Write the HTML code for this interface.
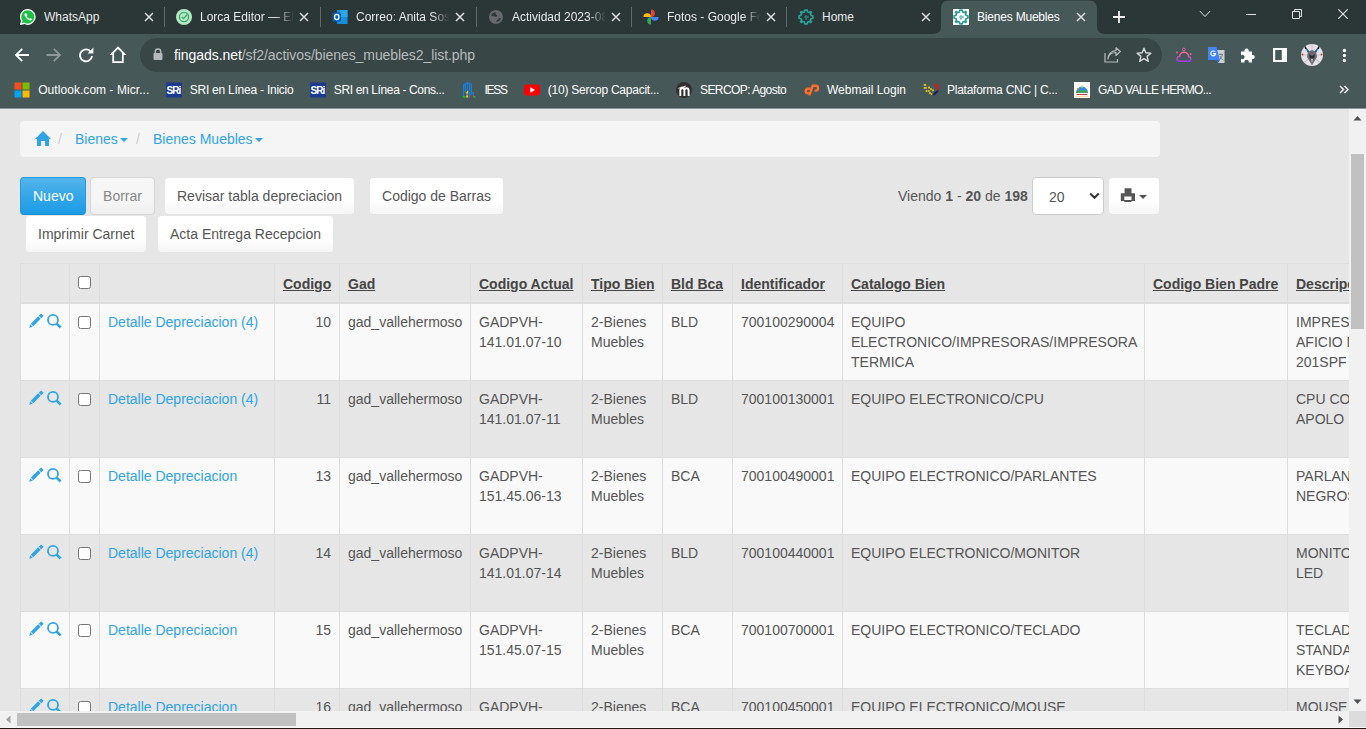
<!DOCTYPE html>
<html><head><meta charset="utf-8"><style>
*{box-sizing:border-box;margin:0;padding:0}
html,body{width:1366px;height:729px;overflow:hidden}
body{position:relative;font-family:"Liberation Sans",sans-serif;background:#e6e6e6;color:#555}
.abs{position:absolute}
#tabstrip{position:absolute;left:0;top:0;width:1366px;height:34px;background:#2b3636}
.tab{position:absolute;top:0;height:34px;width:155px}
.tab .ic{position:absolute;left:10px;top:9px;width:16px;height:16px}
.tt{position:absolute;top:10px;font-size:12px;line-height:14px;color:#e8eaea;white-space:nowrap;overflow:hidden}
.tt.fade{-webkit-mask-image:linear-gradient(90deg,#000 calc(100% - 18px),transparent 100%)}
.tab .x{position:absolute;left:135px;top:13px;width:8px;height:8px}
.sep{position:absolute;top:7px;width:1px;height:20px;background:#5d6a6a}
#toolbar{position:absolute;left:0;top:34px;width:1366px;height:74px;background:#475858}
#omni{position:absolute;left:140px;top:38px;width:1022px;height:34px;border-radius:17px;background:#394646}
.url{position:absolute;left:174px;top:47px;font-size:14px;line-height:16px;color:#b7bcbc;white-space:nowrap}
.url b{font-weight:400;color:#fff}
.bm{position:absolute;top:82px;height:16px}
.bm .bi{position:absolute;left:0;top:0;width:16px;height:16px}
.bt{position:absolute;top:83px;font-size:12px;line-height:14px;color:#ffffff;white-space:nowrap}
#page{position:absolute;left:0;top:108px;width:1349px;height:603px;overflow:hidden;background:#e6e6e6}

.bc{position:absolute;left:20px;top:13px;width:1140px;height:36px;background:#f5f5f5;border-radius:4px}
.bc a{position:absolute;top:9px;font-size:14px;line-height:18px;color:#2fa4e7;white-space:nowrap;text-decoration:none}
.bc .sl{position:absolute;top:9px;font-size:14px;line-height:18px;color:#ccc}
.caret{display:inline-block;width:0;height:0;margin-left:2px;vertical-align:middle;border-top:4px solid;border-right:4px solid transparent;border-left:4px solid transparent}
.btn{position:absolute;height:38px;font-size:14px;line-height:20px;padding:8px 12px;color:#555;border:1px solid #e6e6e6;border-radius:4px;background:linear-gradient(#fff,#fff 60%,#f5f5f5);white-space:nowrap;text-align:center}
.btn.pri{color:#fff;border-color:#1f9ce5;border-bottom-color:#178acc;background:linear-gradient(#54b4eb,#2fa4e7 60%,#1d9ce5)}
.btn.dis{color:#888;border-color:#d6d6d6;background:linear-gradient(#f6f6f6,#f6f6f6 60%,#efefef)}
.info{position:absolute;left:898px;top:78px;font-size:14px;line-height:20px;white-space:nowrap;color:#555}
.info b{color:#555}
.sel{position:absolute;left:1032px;top:69px;width:72px;height:38px;background:#fff;border:1px solid #ccc;border-radius:4px}
table.t{position:absolute;left:20px;top:155px;border-collapse:collapse;table-layout:fixed;font-size:14px;line-height:20px}
table.t th,table.t td{border:1px solid #ddd;padding:8px;vertical-align:top;text-align:left;overflow:hidden;white-space:nowrap}
table.t th{border-bottom:2px solid #ddd;vertical-align:bottom;padding-top:10px}
table.t th a{color:#444;font-weight:700;text-decoration:underline}
table.t tr.o td{background:#f9f9f9}
table.t td{height:77px}
table.t td a{color:#2fa4e7;text-decoration:none}
.r{text-align:right!important}
.wr{white-space:normal!important}
.cb{display:inline-block;width:13px;height:13px;border:1px solid #767676;border-radius:2.5px;background:#fff;margin-top:4px;margin-left:0}
</style></head><body>
<div id="tabstrip"></div>
<svg class="abs" style="left:933px;top:0" width="180" height="34" viewBox="0 0 180 34"><path d="M0 34 Q8 34 8 26 V8.5 Q8 0.5 16 0.5 H156 Q164 0.5 164 8.5 V26 Q164 34 172 34 Z" fill="#475858"/></svg>
<svg class="abs" style="left:20px;top:9px" width="16" height="16" viewBox="0 0 16 16"><path d="M8 0.6 A7.3 7.3 0 1 1 4.2 14.3 L0.6 15.4 L1.8 11.9 A7.3 7.3 0 0 1 8 0.6 Z" fill="#1cc145" stroke="#fff" stroke-width="1.3"/><path d="M5.2 4.2 C4.6 4.6 4.3 5.4 4.7 6.4 C5.4 8.3 7.4 10.6 9.8 11.3 C10.8 11.6 11.5 11.2 11.8 10.6 L11.9 9.9 L10.2 9.1 L9.5 9.9 C8.4 9.4 7.3 8.4 6.6 7.2 L7.3 6.4 L6.5 4.4 Z" fill="#fff"/></svg>
<div class="tt" style="left:44px;width:92px;color:#e6eaea">WhatsApp</div>
<svg class="abs" style="left:144px;top:12px" width="10" height="10" viewBox="0 0 10 10"><path d="M1 1 L9 9 M9 1 L1 9" stroke="#dfe3e3" stroke-width="1.5"/></svg>
<svg class="abs" style="left:176px;top:9px" width="16" height="16" viewBox="0 0 16 16"><circle cx="8" cy="8" r="8" fill="#b5e8c6"/><circle cx="8" cy="8" r="4.6" fill="none" stroke="#3aa866" stroke-width="1.3"/><path d="M5.8 8 L7.5 9.6 L11.5 5.2" fill="none" stroke="#3aa866" stroke-width="1.4"/></svg>
<div class="tt fade" style="left:200px;width:94px;color:#e6eaea">Lorca Editor — El</div>
<svg class="abs" style="left:299px;top:12px" width="10" height="10" viewBox="0 0 10 10"><path d="M1 1 L9 9 M9 1 L1 9" stroke="#dfe3e3" stroke-width="1.5"/></svg>
<svg class="abs" style="left:332px;top:9px" width="16" height="16" viewBox="0 0 16 16"><rect x="5" y="1" width="10.5" height="14" fill="#1490df"/><rect x="8" y="1" width="7.5" height="7" fill="#28a8ea"/><rect x="0.5" y="3.5" width="8.5" height="9" rx="0.8" fill="#0a5db8"/><ellipse cx="4.75" cy="8" rx="2.2" ry="2.6" fill="none" stroke="#fff" stroke-width="1.3"/></svg>
<div class="tt fade" style="left:356px;width:94px;color:#e6eaea">Correo: Anita Sos</div>
<svg class="abs" style="left:455px;top:12px" width="10" height="10" viewBox="0 0 10 10"><path d="M1 1 L9 9 M9 1 L1 9" stroke="#dfe3e3" stroke-width="1.5"/></svg>
<svg class="abs" style="left:489px;top:10px" width="14" height="14" viewBox="0 0 14 14"><circle cx="7" cy="7" r="7" fill="#65686e"/><path d="M2.2 5.5 C3 3.2 5 2.2 7 2.6 C6.2 3.6 6.6 4.6 7.6 5 C8.6 5.4 8.2 6.6 7.2 6.8 C6 7 5.2 6 4.2 6.2 C3.4 6.3 2.8 6 2.2 5.5 Z M6.8 11.6 C7.6 10.4 8.6 10 9.2 9 C9.8 8 10.8 7.8 11.8 8.4 C11.4 10.4 9.6 11.6 6.8 11.6 Z" fill="#2b3636"/></svg>
<div class="tt fade" style="left:512px;width:94px;color:#e6eaea">Actividad 2023-08</div>
<svg class="abs" style="left:611px;top:12px" width="10" height="10" viewBox="0 0 10 10"><path d="M1 1 L9 9 M9 1 L1 9" stroke="#dfe3e3" stroke-width="1.5"/></svg>
<svg class="abs" style="left:643px;top:9px" width="16" height="16" viewBox="0 0 16 16"><path d="M8 0.4 A3.8 3.8 0 0 1 8 8 Z" fill="#ea4335"/><path d="M15.6 8 A3.8 3.8 0 0 1 8 8 Z" fill="#4285f4"/><path d="M8 15.6 A3.8 3.8 0 0 1 8 8 Z" fill="#34a853"/><path d="M0.4 8 A3.8 3.8 0 0 1 8 8 Z" fill="#fbbc04"/></svg>
<div class="tt fade" style="left:667px;width:94px;color:#e6eaea">Fotos - Google Fotos</div>
<svg class="abs" style="left:766px;top:12px" width="10" height="10" viewBox="0 0 10 10"><path d="M1 1 L9 9 M9 1 L1 9" stroke="#dfe3e3" stroke-width="1.5"/></svg>
<svg class="abs" style="left:798px;top:9px" width="16" height="16" viewBox="0 0 16 16"><path d="M6.8 1.6 H9.2 L9.5 3.3 L10.9 3.9 L12.3 2.9 L13.1 3.7 L12.1 5.1 L12.7 6.5 L14.4 6.8 V9.2 L12.7 9.5 L12.1 10.9 L13.1 12.3 L12.3 13.1 L10.9 12.1 L9.5 12.7 L9.2 14.4 H6.8 L6.5 12.7 L5.1 12.1 L3.7 13.1 L2.9 12.3 L3.9 10.9 L3.3 9.5 L1.6 9.2 V6.8 L3.3 6.5 L3.9 5.1 L2.9 3.7 L3.7 2.9 L5.1 3.9 L6.5 3.3 Z" fill="none" stroke="#2aa39a" stroke-width="1.5" stroke-linejoin="round" transform="translate(8 8) scale(1.08) translate(-8 -8)"/><circle cx="8" cy="8" r="1.2" fill="none" stroke="#2aa39a" stroke-width="0.9"/><path d="M8 9.2 V11 M9.2 8 H11" stroke="#2aa39a" stroke-width="0.9"/></svg>
<div class="tt" style="left:822px;width:91px;color:#e6eaea">Home</div>
<svg class="abs" style="left:921px;top:12px" width="10" height="10" viewBox="0 0 10 10"><path d="M1 1 L9 9 M9 1 L1 9" stroke="#dfe3e3" stroke-width="1.5"/></svg>
<svg class="abs" style="left:953px;top:9px" width="16" height="16" viewBox="0 0 16 16"><rect width="16" height="16" fill="#fff"/><path d="M6.8 1.6 H9.2 L9.5 3.3 L10.9 3.9 L12.3 2.9 L13.1 3.7 L12.1 5.1 L12.7 6.5 L14.4 6.8 V9.2 L12.7 9.5 L12.1 10.9 L13.1 12.3 L12.3 13.1 L10.9 12.1 L9.5 12.7 L9.2 14.4 H6.8 L6.5 12.7 L5.1 12.1 L3.7 13.1 L2.9 12.3 L3.9 10.9 L3.3 9.5 L1.6 9.2 V6.8 L3.3 6.5 L3.9 5.1 L2.9 3.7 L3.7 2.9 L5.1 3.9 L6.5 3.3 Z" fill="none" stroke="#2a9d94" stroke-width="1.5" stroke-linejoin="round" transform="translate(8 8) scale(1.08) translate(-8 -8)"/><circle cx="8" cy="8" r="1.2" fill="none" stroke="#2a9d94" stroke-width="0.9"/><path d="M8 9.2 V11 M9.2 8 H11" stroke="#2a9d94" stroke-width="0.9"/></svg>
<div class="tt" style="left:977px;width:91px;color:#ffffff;letter-spacing:-0.2px">Bienes Muebles</div>
<svg class="abs" style="left:1076px;top:12px" width="10" height="10" viewBox="0 0 10 10"><path d="M1 1 L9 9 M9 1 L1 9" stroke="#dfe3e3" stroke-width="1.5"/></svg>
<div class="sep" style="left:164px"></div>
<div class="sep" style="left:320px"></div>
<div class="sep" style="left:476px"></div>
<div class="sep" style="left:631px"></div>
<div class="sep" style="left:786px"></div>
<svg class="abs" style="left:1113px;top:11px" width="12" height="12" viewBox="0 0 12 12"><path d="M6 0 V12 M0 6 H12" stroke="#f4f6f6" stroke-width="1.8"/></svg>
<svg class="abs" style="left:1199px;top:10px" width="12" height="8" viewBox="0 0 12 8"><path d="M0.8 1 L6 6.5 L11.2 1" fill="none" stroke="#e3e6e6" stroke-width="1"/></svg>
<div class="abs" style="left:1246px;top:14px;width:10px;height:1px;background:#e3e6e6"></div>
<svg class="abs" style="left:1292px;top:9px" width="10" height="10" viewBox="0 0 10 10"><path d="M2.5 2.5 V0.5 H9.5 V7.5 H7.5 M0.5 2.5 H7.5 V9.5 H0.5 Z" fill="none" stroke="#e3e6e6" stroke-width="1"/></svg>
<svg class="abs" style="left:1338px;top:9px" width="10" height="10" viewBox="0 0 10 10"><path d="M0.3 0.3 L9.7 9.7 M9.7 0.3 L0.3 9.7" stroke="#e3e6e6" stroke-width="1.1"/></svg>
<div id="toolbar"></div>
<div id="omni"></div>
<svg class="abs" style="left:14px;top:47px" width="16" height="16" viewBox="0 0 16 16"><path d="M15 8 H2.5 M8.2 1.8 L2 8 L8.2 14.2" fill="none" stroke="#ffffff" stroke-width="1.8"/></svg>
<svg class="abs" style="left:46px;top:47px" width="16" height="16" viewBox="0 0 16 16"><path d="M0.5 8 H13.5 M7.8 1.8 L14 8 L7.8 14.2" fill="none" stroke="#8d9898" stroke-width="1.8"/></svg>
<svg class="abs" style="left:78px;top:47px" width="16" height="16" viewBox="0 0 16 16"><path d="M13 5 A6 6 0 1 0 14 9" fill="none" stroke="#ffffff" stroke-width="1.8"/><path d="M15.4 0.6 V6.4 H9.6 Z" fill="#ffffff"/></svg>
<svg class="abs" style="left:109px;top:46px" width="18" height="18" viewBox="0 0 18 18"><path d="M9 1.6 L2.6 8.2 H4.2 V16.2 H13.8 V8.2 H15.4 Z" fill="none" stroke="#ffffff" stroke-width="1.8" stroke-linejoin="miter"/></svg>
<svg class="abs" style="left:153px;top:48px" width="10" height="12" viewBox="0 0 10 12"><path d="M2.3 5 V3.6 A2.7 2.7 0 0 1 7.7 3.6 V5" fill="none" stroke="#b3b8b8" stroke-width="1.5"/><rect x="0.5" y="5" width="9" height="7" rx="1" fill="#b3b8b8"/></svg>
<svg class="abs" style="left:1104px;top:47px" width="17" height="16" viewBox="0 0 17 16"><path d="M1 6 V15 H13.5 V12" fill="none" stroke="#b7bcbc" stroke-width="1.2"/><path d="M4 12 C4.5 7.5 8 5.5 12 5.5 V8.5 L16.3 4.5 L12 0.8 V3.6 C7 3.8 4.2 7.5 4 12 Z" fill="none" stroke="#b7bcbc" stroke-width="1.2" stroke-linejoin="round"/></svg>
<svg class="abs" style="left:1136px;top:47px" width="16" height="16" viewBox="0 0 16 16"><path d="M8 1.2 L9.9 5.8 L14.9 6.2 L11.1 9.4 L12.3 14.3 L8 11.7 L3.7 14.3 L4.9 9.4 L1.1 6.2 L6.1 5.8 Z" fill="none" stroke="#d5d9d9" stroke-width="1.4" stroke-linejoin="round"/></svg>
<svg class="abs" style="left:1175px;top:47px" width="18" height="16" viewBox="0 0 18 16"><defs><linearGradient id="wg" x1="0" y1="0" x2="0" y2="1"><stop offset="0" stop-color="#ff6a8a"/><stop offset="1" stop-color="#9b3df0"/></linearGradient></defs><circle cx="8.8" cy="2.4" r="1.3" fill="none" stroke="#e060b0" stroke-width="1"/><circle cx="2" cy="5.5" r="1" fill="#e060b0"/><circle cx="15.6" cy="7" r="1" fill="#e060b0"/><path d="M4 14.2 H13.6 A2.2 2.2 0 0 0 13.6 9.8 A4.4 4.4 0 0 0 4.6 9.6 A2.3 2.3 0 0 0 4 14.2 Z" fill="none" stroke="url(#wg)" stroke-width="1.5"/></svg>
<svg class="abs" style="left:1208px;top:47px" width="17" height="16" viewBox="0 0 17 16"><path d="M7 3 H16.5 V16 H10 Z" fill="#ccd0d0"/><path d="M11.2 7.5 H15 M13 6.5 V7.5 M11.8 9 C12.5 11 14 12.5 15.3 13 M14.4 7.5 C14 10 12.5 12 11 13" stroke="#6f7777" stroke-width="0.9" fill="none"/><path d="M0 0 H8.5 L12 13 H0 Z" fill="#4285f4"/><path d="M7.6 6.3 A2.4 2.4 0 1 1 6.9 4.7 M5.3 6.6 H7.7" fill="none" stroke="#fff" stroke-width="1.2"/><path d="M8.5 13 L10 16 L12 13 Z" fill="#2b62c4"/></svg>
<svg class="abs" style="left:1240px;top:48px" width="16" height="15" viewBox="0 0 16 15"><path d="M1 3.6 H4.6 A2.2 2.2 0 1 1 8.6 3.6 H12 V7 A2.1 2.1 0 1 1 12 11 V14.5 H8.7 A2.2 2.2 0 1 0 4.5 14.5 H1 V10.5 A2.1 2.1 0 1 0 1 7.6 Z" fill="#ffffff"/></svg>
<svg class="abs" style="left:1273px;top:48px" width="14" height="14" viewBox="0 0 14 14"><path d="M0 0 H14 V14 H0 Z M2.2 2 V12 H8.8 V2 Z" fill="#fff" fill-rule="evenodd"/></svg>
<svg class="abs" style="left:1301px;top:44px" width="22" height="22" viewBox="0 0 22 22"><defs><clipPath id="avc"><circle cx="11" cy="11" r="11"/></clipPath></defs><g clip-path="url(#avc)"><rect width="22" height="22" fill="#e4e2e8"/><path d="M11 0 V22 M0 11 H22 M2 2 L20 20 M20 2 L2 20" stroke="#c9c4cc" stroke-width="1.2"/><path d="M4 2 L9 8 L6.5 8.5 Z M18 2 L13 8 L15.5 8.5 Z" fill="#1d5fb0"/><path d="M3.5 1.5 L5 5 M18.5 1.5 L17 5" stroke="#111" stroke-width="1.3"/><path d="M7 8 L11 6 L15 8 L16 13 L13 18 L11 21 L9 18 L6 13 Z" fill="#6a6a72"/><path d="M8 10 L11 12 L14 10 L13 15 L11 17 L9 15 Z" fill="#2a2a30"/><path d="M9.5 14 L11 15 L12.5 14 L11 19 Z" fill="#b8b8c0"/><circle cx="1.5" cy="10.5" r="0.9" fill="#c53a3a"/><circle cx="20.5" cy="10.5" r="0.9" fill="#c53a3a"/></g></svg>
<svg class="abs" style="left:1342px;top:48px" width="5" height="15" viewBox="0 0 5 15"><circle cx="2.4" cy="2.5" r="1.65" fill="#fff"/><circle cx="2.4" cy="7.5" r="1.65" fill="#fff"/><circle cx="2.4" cy="12.5" r="1.65" fill="#fff"/></svg>
<svg class="abs" style="left:14px;top:82px" width="16" height="16" viewBox="0 0 16 16"><rect x="0.5" y="0.5" width="7" height="7" fill="#f25022"/><rect x="8.5" y="0.5" width="7" height="7" fill="#7fba00"/><rect x="0.5" y="8.5" width="7" height="7" fill="#00a4ef"/><rect x="8.5" y="8.5" width="7" height="7" fill="#ffb900"/></svg>
<div class="bt" style="left:38.2px;letter-spacing:0.056px">Outlook.com - Micr...</div>
<svg class="abs" style="left:166px;top:82px" width="16" height="16" viewBox="0 0 16 16"><rect x="0" y="0.5" width="16" height="15" fill="#1d3a8f"/><text x="0.6" y="12" font-family="Liberation Sans" font-weight="700" font-size="10" fill="#fff" letter-spacing="-1">SRi</text></svg>
<div class="bt" style="left:189.7px;letter-spacing:-0.235px">SRI en Línea - Inicio</div>
<svg class="abs" style="left:310px;top:82px" width="16" height="16" viewBox="0 0 16 16"><rect x="0" y="0.5" width="16" height="15" fill="#1d3a8f"/><text x="0.6" y="12" font-family="Liberation Sans" font-weight="700" font-size="10" fill="#fff" letter-spacing="-1">SRi</text></svg>
<div class="bt" style="left:333.8px;letter-spacing:-0.365px">SRI en Línea - Cons...</div>
<svg class="abs" style="left:462px;top:82px" width="14" height="16" viewBox="0 0 14 16"><path d="M1.6 14.5 V3 L3.4 2.2 V11 M3.4 9 V1.6 L5.5 0.8 V10 M5.5 8 V0.8 L7.6 1.5 V9 M7.6 9 V1.5 L9.4 2.4 V12 M9.4 10 L11.2 10.5 V14.5" fill="none" stroke="#1a7fe0" stroke-width="1.2"/><path d="M4 15.5 L4.8 12.5 L4.2 10.5 L5.6 8.5 L6.4 10 L5.4 12.2 L6.4 15.5 Z" fill="#f7d307"/><path d="M6.8 15.5 V10 L8.2 9.3 L9 11 L8.2 15.5 Z" fill="#1a7fe0"/><path d="M9 15.5 L9.6 12.6 L10.6 13.5 L10 15.5 Z" fill="#e82020"/><path d="M0.5 14.8 H4 M11 14.8 H13.5" stroke="#19c82a" stroke-width="1.3"/></svg>
<div class="bt" style="left:484.6px;letter-spacing:-1.315px">IESS</div>
<svg class="abs" style="left:524px;top:82px" width="16" height="16" viewBox="0 0 16 16"><rect x="0" y="2.5" width="16" height="11" rx="3" fill="#ff0000"/><path d="M6.3 5.2 L11 8 L6.3 10.8 Z" fill="#fff"/></svg>
<div class="bt" style="left:547.8px;letter-spacing:-0.242px">(10) Sercop Capacit...</div>
<svg class="abs" style="left:676px;top:82px" width="16" height="16" viewBox="0 0 16 16"><circle cx="8" cy="8" r="8" fill="#303030"/><path d="M4.3 14 V8.3 C4.3 6.8 5.2 6.2 6.6 6.2 C7.8 6.2 8.4 6.8 8.4 8.1 V14 M8.4 8.1 C8.4 6.8 9.2 6.2 10.5 6.2 C11.9 6.2 12.6 6.8 12.6 8.3 V14" fill="none" stroke="#fff" stroke-width="1.9"/><path d="M1.5 6.3 L7.5 4.3 L10.5 3.6 L8.6 5.6 L4 6.6 Z" fill="#fff"/></svg>
<div class="bt" style="left:700.0px;letter-spacing:-0.575px">SERCOP: Agosto</div>
<svg class="abs" style="left:803px;top:84px" width="17" height="12" viewBox="0 0 17 12"><path d="M8 3.5 H5 A3.5 3.5 0 0 0 5 10.5 H6.5 L7.3 8 H5 A1 1 0 0 1 5 6 H7.3 Z" fill="#ff6c2c"/><path d="M8.8 0.6 H12.6 A3.6 3.6 0 0 1 12.6 7.8 H11.3 L12 5.4 H12.6 A1.2 1.2 0 0 0 12.6 3 H10.6 L7.6 11.6 H5.4 Z" fill="#ff6c2c"/></svg>
<div class="bt" style="left:827.0px;letter-spacing:-0.012px">Webmail Login</div>
<svg class="abs" style="left:923px;top:83px" width="17" height="13" viewBox="0 0 17 13"><g fill="#e9c31a"><rect x="0.5" y="1" width="3" height="1.8" rx="0.9"/><rect x="0.5" y="4" width="3.5" height="1.8" rx="0.9"/><circle cx="6" cy="4.6" r="1.1"/><circle cx="8" cy="6" r="1.1"/><circle cx="10" cy="7.3" r="1.1"/><circle cx="3.6" cy="8" r="1.1"/><circle cx="5.8" cy="8" r="1.1"/><circle cx="7" cy="10" r="1.1"/><circle cx="8.5" cy="11" r="1"/></g><path d="M11 1.5 L13 0.8 L15.5 2.5 L16 6 L14 7.5 L13 4 L11.5 3 Z" fill="#c8201e"/><path d="M9.5 12 L12 9 L16 6.8 L14.5 9.5 L11 12.5 Z" fill="#14185a"/></svg>
<div class="bt" style="left:947.0px;letter-spacing:-0.248px">Plataforma CNC | C...</div>
<svg class="abs" style="left:1074px;top:82px" width="16" height="16" viewBox="0 0 16 16"><rect width="16" height="16" fill="#fff"/><path d="M2 11 A6 6.5 0 0 1 14 11 Z" fill="#2f8ef0"/><path d="M2.2 11 C3 8 5 7.5 7 9 C9 7 12 7.5 13.8 11 Z" fill="#4aa52a"/><circle cx="4" cy="7" r="1" fill="#f07a1a"/><path d="M7 9.5 H9.5 L10 11 H6.5 Z" fill="#3a9ae0"/><path d="M2.5 12.5 H13.5" stroke="#d9363a" stroke-width="1"/><path d="M1.5 14.6 H14.5" stroke="#f0d890" stroke-width="0.9"/><path d="M8 3 V6" stroke="#f1d13a" stroke-width="1"/></svg>
<div class="bt" style="left:1098.0px;letter-spacing:-0.601px">GAD VALLE HERMO...</div>
<svg class="abs" style="left:1339px;top:85px" width="10" height="9" viewBox="0 0 10 9"><path d="M1 1 L4.5 4.5 L1 8 M5.5 1 L9 4.5 L5.5 8" fill="none" stroke="#e8ebeb" stroke-width="1.5"/></svg>
<div class="abs" style="left:0;top:107px;width:1366px;height:1px;background:#435454"></div><div class="abs" style="left:0;top:108px;width:1366px;height:1px;background:#8f9999;z-index:5"></div>
<div class="url" style="letter-spacing:-0.07px"><b>fingads.net</b>/sf2/activos/bienes_muebles2_list.php</div>
<div id="page">
<div class="bc">
<svg class="abs" style="left:15px;top:10px" width="16" height="15" viewBox="0 0 16 15"><path d="M8 0 L16 8 L14 8 L14 15 L10 15 L10 10 L6 10 L6 15 L2 15 L2 8 L0 8 Z" fill="#2fa4e7"/></svg>
<span class="sl" style="left:38px">/</span>
<a style="left:55px">Bienes<span class="caret"></span></a>
<span class="sl" style="left:116px">/</span>
<a style="left:133px">Bienes Muebles<span class="caret"></span></a>
</div>
<div class="btn pri" style="left:20px;top:69px;width:66px">Nuevo</div>
<div class="btn dis" style="left:90px;top:69px;width:65px">Borrar</div>
<div class="btn" style="left:164px;top:69px;width:191px">Revisar tabla depreciacion</div>
<div class="btn" style="left:369px;top:69px;width:135px">Codigo de Barras</div>
<div class="btn" style="left:25px;top:107px;width:122px">Imprimir Carnet</div>
<div class="btn" style="left:157px;top:107px;width:177px">Acta Entrega Recepcion</div>
<div class="info">Viendo <b>1</b> - <b>20</b> de <b>198</b></div>
<div class="sel"><span class="abs" style="left:16px;top:9px;font-size:14px;line-height:20px;color:#555">20</span>
<svg class="abs" style="left:56px;top:14px" width="11" height="8" viewBox="0 0 11 8"><path d="M1.2 1.5 L5.5 5.8 L9.8 1.5" fill="none" stroke="#333" stroke-width="2"/></svg></div>
<div class="btn" style="left:1108px;top:69px;width:52px"><svg class="abs" style="left:11px;top:10px" width="16" height="15" viewBox="0 0 16 15"><path d="M4.6 0.2 H11.5 V5.6 H4.6 Z M0.8 5.2 H15 V13 H11.5 V8.4 H4.3 V13 H0.8 Z M4.3 12.1 H11.5 V14 H4.3 Z" fill="#555"/></svg><span class="caret abs" style="left:30px;top:17px;margin:0;color:#555"></span></div>
<table class="t" style="width:1487px"><colgroup><col style="width:49px"><col style="width:30px"><col style="width:175px"><col style="width:65px"><col style="width:131px"><col style="width:112px"><col style="width:80px"><col style="width:70px"><col style="width:110px"><col style="width:302px"><col style="width:143px"><col style="width:220px"></colgroup><tr><th></th><th style="text-align:center"><span class="cb" style="margin-top:0"></span></th><th></th><th class="r"><a>Codigo</a></th><th><a>Gad</a></th><th><a>Codigo Actual</a></th><th><a>Tipo Bien</a></th><th><a>Bld Bca</a></th><th><a>Identificador</a></th><th><a>Catalogo Bien</a></th><th><a>Codigo Bien Padre</a></th><th><a>Descripcion</a></th></tr><tr class="o"><td style="position:relative"><svg width="44" height="26" viewBox="0 0 44 26" style="position:absolute;left:3px;top:4px"><g fill="#2fa4e7" transform="translate(5.3 19.7) rotate(-45)"><path d="M0 0 L3.1 -1.9 V1.9 Z"/><rect x="3.9" y="-1.75" width="10.4" height="3.5"/><rect x="15.1" y="-1.75" width="3.4" height="3.5"/></g><circle cx="29" cy="11.9" r="5" fill="none" stroke="#2fa4e7" stroke-width="1.8"/><path d="M32.4 15.3 L36.6 19.5" stroke="#2fa4e7" stroke-width="2.6"/></svg></td><td style="text-align:center"><span class="cb"></span></td><td><a>Detalle Depreciacion (4)</a></td><td class="r">10</td><td>gad_vallehermoso</td><td>GADPVH-<br>141.01.07-10</td><td>2-Bienes<br>Muebles</td><td>BLD</td><td>700100290004</td><td>EQUIPO<br>ELECTRONICO/IMPRESORAS/IMPRESORA<br>TERMICA</td><td></td><td>IMPRESORA<br>AFICIO MP<br>201SPF</td></tr><tr class="e"><td style="position:relative"><svg width="44" height="26" viewBox="0 0 44 26" style="position:absolute;left:3px;top:4px"><g fill="#2fa4e7" transform="translate(5.3 19.7) rotate(-45)"><path d="M0 0 L3.1 -1.9 V1.9 Z"/><rect x="3.9" y="-1.75" width="10.4" height="3.5"/><rect x="15.1" y="-1.75" width="3.4" height="3.5"/></g><circle cx="29" cy="11.9" r="5" fill="none" stroke="#2fa4e7" stroke-width="1.8"/><path d="M32.4 15.3 L36.6 19.5" stroke="#2fa4e7" stroke-width="2.6"/></svg></td><td style="text-align:center"><span class="cb"></span></td><td><a>Detalle Depreciacion (4)</a></td><td class="r">11</td><td>gad_vallehermoso</td><td>GADPVH-<br>141.01.07-11</td><td>2-Bienes<br>Muebles</td><td>BLD</td><td>700100130001</td><td>EQUIPO ELECTRONICO/CPU</td><td></td><td>CPU CORE<br>APOLO</td></tr><tr class="o"><td style="position:relative"><svg width="44" height="26" viewBox="0 0 44 26" style="position:absolute;left:3px;top:4px"><g fill="#2fa4e7" transform="translate(5.3 19.7) rotate(-45)"><path d="M0 0 L3.1 -1.9 V1.9 Z"/><rect x="3.9" y="-1.75" width="10.4" height="3.5"/><rect x="15.1" y="-1.75" width="3.4" height="3.5"/></g><circle cx="29" cy="11.9" r="5" fill="none" stroke="#2fa4e7" stroke-width="1.8"/><path d="M32.4 15.3 L36.6 19.5" stroke="#2fa4e7" stroke-width="2.6"/></svg></td><td style="text-align:center"><span class="cb"></span></td><td><a>Detalle Depreciacion</a></td><td class="r">13</td><td>gad_vallehermoso</td><td>GADPVH-<br>151.45.06-13</td><td>2-Bienes<br>Muebles</td><td>BCA</td><td>700100490001</td><td>EQUIPO ELECTRONICO/PARLANTES</td><td></td><td>PARLANTES<br>NEGROS</td></tr><tr class="e"><td style="position:relative"><svg width="44" height="26" viewBox="0 0 44 26" style="position:absolute;left:3px;top:4px"><g fill="#2fa4e7" transform="translate(5.3 19.7) rotate(-45)"><path d="M0 0 L3.1 -1.9 V1.9 Z"/><rect x="3.9" y="-1.75" width="10.4" height="3.5"/><rect x="15.1" y="-1.75" width="3.4" height="3.5"/></g><circle cx="29" cy="11.9" r="5" fill="none" stroke="#2fa4e7" stroke-width="1.8"/><path d="M32.4 15.3 L36.6 19.5" stroke="#2fa4e7" stroke-width="2.6"/></svg></td><td style="text-align:center"><span class="cb"></span></td><td><a>Detalle Depreciacion (4)</a></td><td class="r">14</td><td>gad_vallehermoso</td><td>GADPVH-<br>141.01.07-14</td><td>2-Bienes<br>Muebles</td><td>BLD</td><td>700100440001</td><td>EQUIPO ELECTRONICO/MONITOR</td><td></td><td>MONITOR<br>LED</td></tr><tr class="o"><td style="position:relative"><svg width="44" height="26" viewBox="0 0 44 26" style="position:absolute;left:3px;top:4px"><g fill="#2fa4e7" transform="translate(5.3 19.7) rotate(-45)"><path d="M0 0 L3.1 -1.9 V1.9 Z"/><rect x="3.9" y="-1.75" width="10.4" height="3.5"/><rect x="15.1" y="-1.75" width="3.4" height="3.5"/></g><circle cx="29" cy="11.9" r="5" fill="none" stroke="#2fa4e7" stroke-width="1.8"/><path d="M32.4 15.3 L36.6 19.5" stroke="#2fa4e7" stroke-width="2.6"/></svg></td><td style="text-align:center"><span class="cb"></span></td><td><a>Detalle Depreciacion</a></td><td class="r">15</td><td>gad_vallehermoso</td><td>GADPVH-<br>151.45.07-15</td><td>2-Bienes<br>Muebles</td><td>BCA</td><td>700100700001</td><td>EQUIPO ELECTRONICO/TECLADO</td><td></td><td>TECLADO<br>STANDARD<br>KEYBOARD</td></tr><tr class="e"><td style="position:relative"><svg width="44" height="26" viewBox="0 0 44 26" style="position:absolute;left:3px;top:4px"><g fill="#2fa4e7" transform="translate(5.3 19.7) rotate(-45)"><path d="M0 0 L3.1 -1.9 V1.9 Z"/><rect x="3.9" y="-1.75" width="10.4" height="3.5"/><rect x="15.1" y="-1.75" width="3.4" height="3.5"/></g><circle cx="29" cy="11.9" r="5" fill="none" stroke="#2fa4e7" stroke-width="1.8"/><path d="M32.4 15.3 L36.6 19.5" stroke="#2fa4e7" stroke-width="2.6"/></svg></td><td style="text-align:center"><span class="cb"></span></td><td><a>Detalle Depreciacion</a></td><td class="r">16</td><td>gad_vallehermoso</td><td>GADPVH-<br>151.45.07-16</td><td>2-Bienes<br>Muebles</td><td>BCA</td><td>700100450001</td><td>EQUIPO ELECTRONICO/MOUSE</td><td></td><td>MOUSE<br>OPTICO</td></tr></table>
</div>

<div class="abs" style="left:1349px;top:108px;width:17px;height:603px;background:#f1f1f1"></div>
<svg class="abs" style="left:1353px;top:115px" width="9" height="6" viewBox="0 0 9 6"><path d="M0.5 5.5 L4.5 1 L8.5 5.5 Z" fill="#505050"/></svg>
<div class="abs" style="left:1351px;top:154px;width:13px;height:175px;background:#c1c1c1"></div>
<svg class="abs" style="left:1353px;top:699px" width="9" height="6" viewBox="0 0 9 6"><path d="M0.5 0.5 L4.5 5 L8.5 0.5 Z" fill="#505050"/></svg>
<div class="abs" style="left:0;top:711px;width:1349px;height:16px;background:#f1f1f1"></div>
<div class="abs" style="left:1349px;top:711px;width:17px;height:16px;background:#dcdcdc"></div>
<svg class="abs" style="left:5px;top:715px" width="6" height="9" viewBox="0 0 6 9"><path d="M5.5 0.5 L1 4.5 L5.5 8.5 Z" fill="#a3a3a3"/></svg>
<div class="abs" style="left:17px;top:713px;width:279px;height:13px;background:#c1c1c1"></div>
<svg class="abs" style="left:1338px;top:715px" width="6" height="9" viewBox="0 0 6 9"><path d="M0.5 0.5 L5 4.5 L0.5 8.5 Z" fill="#505050"/></svg>
<div class="abs" style="left:0;top:727px;width:1366px;height:1px;background:#f7f7f7"></div>
<div class="abs" style="left:0;top:728px;width:1366px;height:1px;background:#1e1612"></div>
</body></html>
